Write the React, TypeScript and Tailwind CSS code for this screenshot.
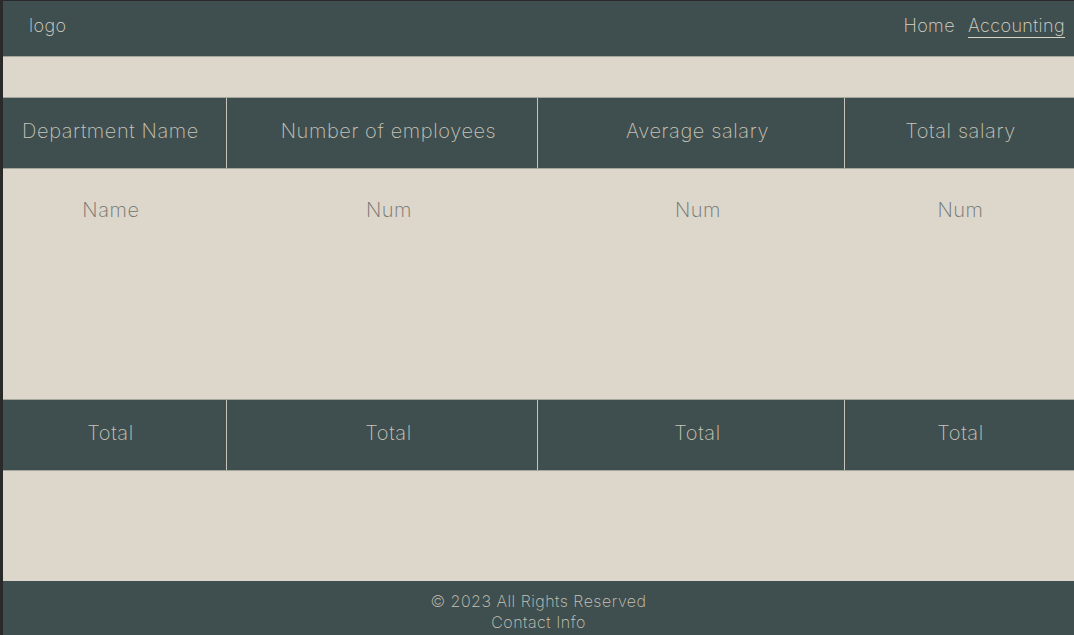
const cols = ["Department Name", "Number of employees", "Average salary", "Total salary"];
const body = ["Name", "Num", "Num", "Num"];

const cellPad = ["pr-[8px]", "pl-[13px]", "pl-[13px]", "pl-[2px]"];

function Row({ items, height, tone }: { items: string[]; height: string; tone: "dark" | "light" }) {
  const dark = tone === "dark";
  return (
    <div
      className={`grid grid-cols-[224px_311px_307px_1fr] ${height} ${
        dark ? "border-y border-[#a4a69e] bg-[#3f4f4f] text-[#c9c4b8]" : "text-[#6e7470]"
      }`}
    >
      {items.map((t, i) => (
        <div
          key={i}
          className={`flex justify-center ${cellPad[i]} ${dark ? "items-center pb-[4px]" : "items-start pt-[26px]"} ${
            dark && i < 3 ? "border-r border-[#c9c4b8]" : ""
          }`}
        >
          {t}
        </div>
      ))}
    </div>
  );
}

export default function App() {
  return (
    <div className="h-[635px] overflow-hidden border-l-[3px] border-t border-[#2a2a2a] bg-[#ddd6ca] font-['Inter',sans-serif] font-extralight">
      <header className="flex h-[56px] items-center justify-between border-b border-[#a4a69e] bg-[#3f4f4f] pl-[26px] pr-[9px] text-[18px] tracking-[0.4px] text-[#d9d3c7]">
        <div className="-mt-[6px]">logo</div>
        <nav className="-mt-[6px] flex gap-[13px]">
          <a>Home</a>
          <a className="underline decoration-1 underline-offset-[5px]">Accounting</a>
        </nav>
      </header>
      <div className="h-[40px]" />
      <div className="text-[20px] tracking-[0.6px]">
        <Row items={cols} height="h-[72px]" tone="dark" />
        <Row items={body} height="h-[230px]" tone="light" />
        <Row items={["Total", "Total", "Total", "Total"]} height="h-[72px]" tone="dark" />
      </div>
      <div className="h-[110px]" />
      <footer className="flex h-[60px] flex-col items-center bg-[#3f4f4f] pt-[10px] text-[16px] leading-[21px] tracking-[0.5px] text-[#c9c4b8]">
        <p>© 2023 All Rights Reserved</p>
        <p>Contact Info</p>
      </footer>
    </div>
  );
}
